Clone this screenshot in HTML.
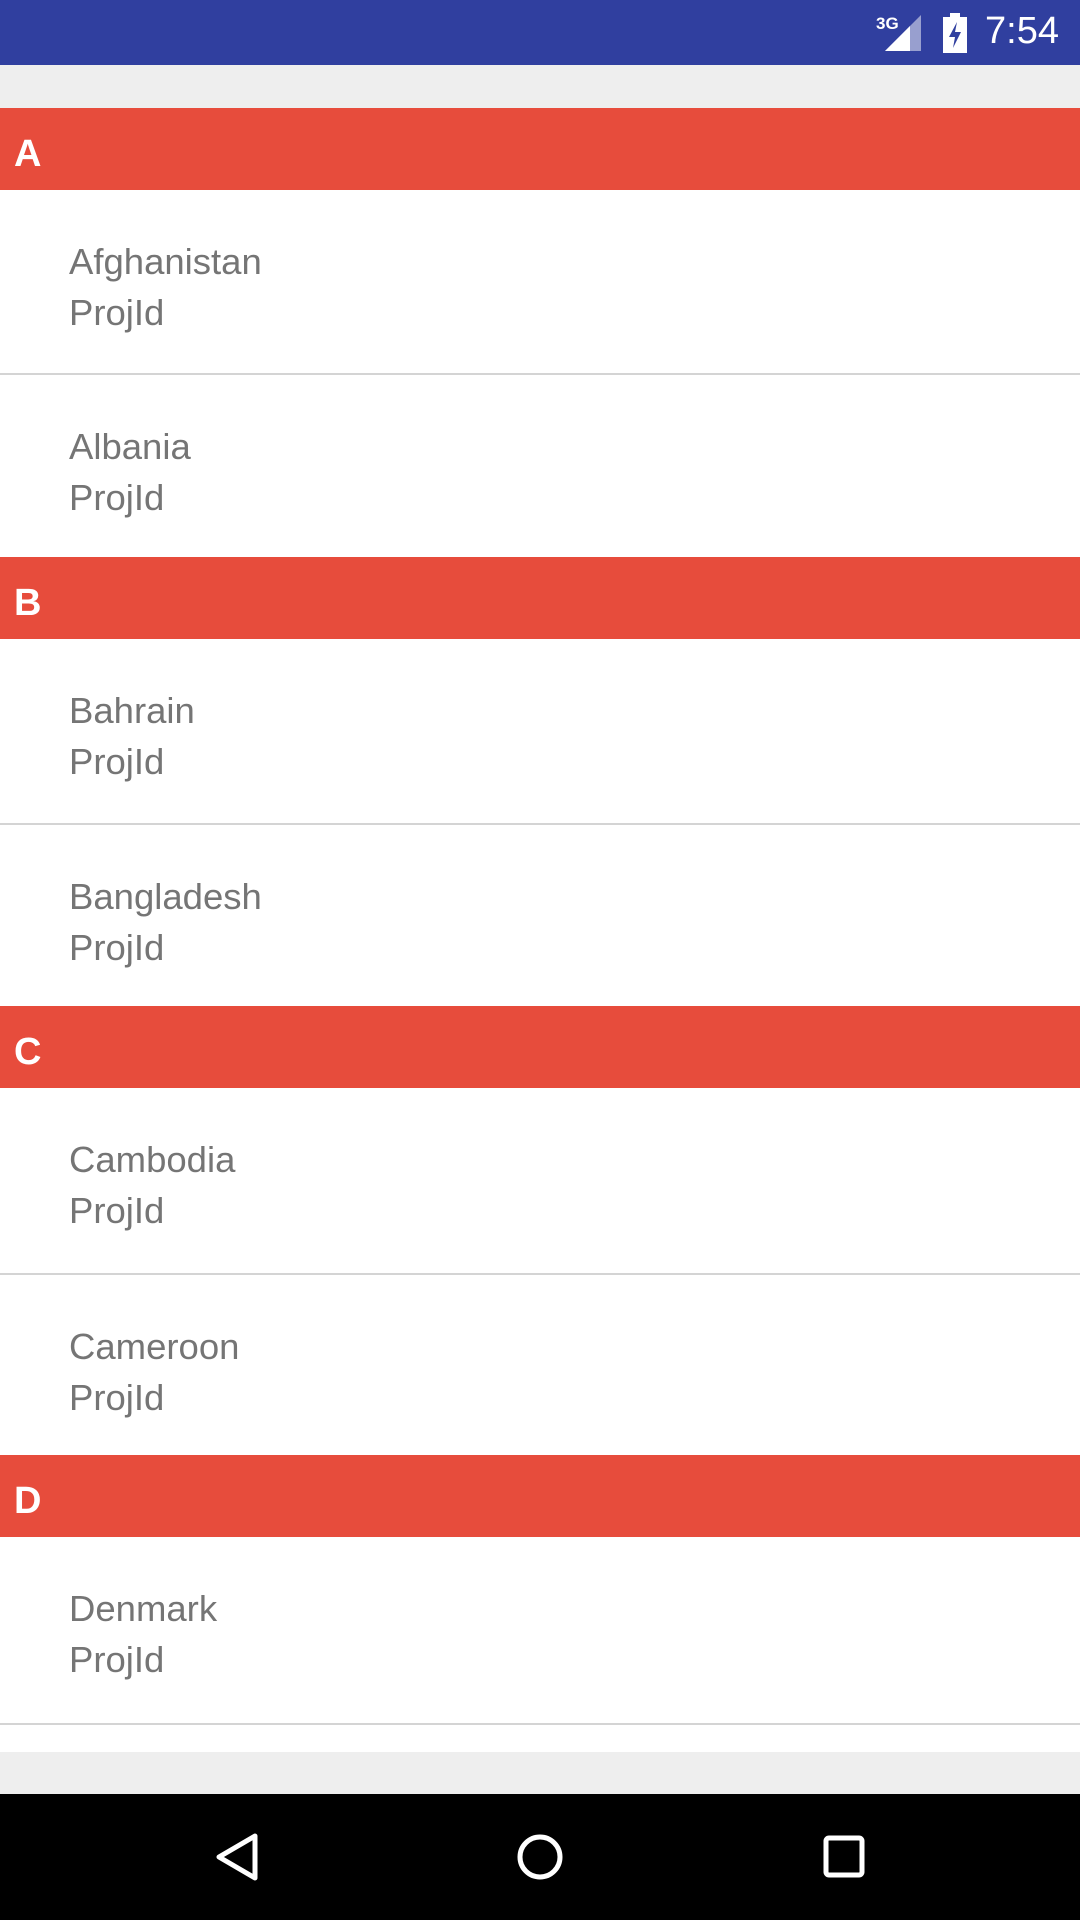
<!DOCTYPE html>
<html><head><meta charset="utf-8"><style>
*{margin:0;padding:0;box-sizing:border-box}
body{width:1080px;height:1920px;overflow:hidden;background:#eeeeee;font-family:"Liberation Sans",sans-serif;position:relative}
.sb{position:absolute;top:0;left:0;width:1080px;height:65px;background:#303f9f}
.hdr{position:absolute;left:0;width:1080px;height:82px;background:#e74c3c;color:#fff;font-weight:bold;font-size:38px;padding-left:14px;padding-top:5px;line-height:82px}
.it{position:absolute;left:0;width:1080px;background:#fff;border-bottom:2px solid #d4d4d4;color:#757575;font-size:36.5px}
.it span{position:absolute;left:69px}
.nav{position:absolute;left:0;top:1794px;width:1080px;height:126px;background:#000}
</style></head><body>
<div class="sb">
<span style="position:absolute;left:876px;top:14px;color:#fff;font-size:17px;font-weight:bold">3G</span>
<svg style="position:absolute;left:884px;top:14px" width="38" height="38"><polygon points="37,1 37,37 1,37" fill="#fff" opacity=".5"/><polygon points="26,12 26,37 1,37" fill="#fff"/></svg>
<svg style="position:absolute;left:942px;top:13px" width="26" height="40"><rect x="8" y="0" width="10" height="4" fill="#fff"/><rect x="1" y="4" width="24" height="36" fill="#fff"/><polygon points="15,9 7,24 13,24 11,35 19,19 13,19" fill="#303f9f"/></svg>
<span style="position:absolute;left:985px;top:10px;color:#fff;font-size:38px">7:54</span>
</div>

<div class="hdr" style="top:108px">A</div>
<div class="it" style="top:190px;height:185px"><span style="top:51px">Afghanistan</span><span style="top:102px">ProjId</span></div>
<div class="it" style="top:375px;height:182px;border:none"><span style="top:51px">Albania</span><span style="top:102px">ProjId</span></div>

<div class="hdr" style="top:557px">B</div>
<div class="it" style="top:639px;height:186px"><span style="top:51px">Bahrain</span><span style="top:102px">ProjId</span></div>
<div class="it" style="top:825px;height:181px;border:none"><span style="top:51px">Bangladesh</span><span style="top:102px">ProjId</span></div>

<div class="hdr" style="top:1006px">C</div>
<div class="it" style="top:1088px;height:187px"><span style="top:51px">Cambodia</span><span style="top:102px">ProjId</span></div>
<div class="it" style="top:1275px;height:180px;border:none"><span style="top:51px">Cameroon</span><span style="top:102px">ProjId</span></div>

<div class="hdr" style="top:1455px">D</div>
<div class="it" style="top:1537px;height:188px"><span style="top:51px">Denmark</span><span style="top:102px">ProjId</span></div>
<div class="it" style="top:1725px;height:27px;border:none"></div>

<div class="nav">
<svg style="position:absolute;left:214px;top:38px" width="46" height="50"><polygon points="41,4 41,46 5,25" fill="none" stroke="#fff" stroke-width="5" stroke-linejoin="round"/></svg>
<svg style="position:absolute;left:516px;top:38px" width="48" height="50"><circle cx="24" cy="25" r="20" fill="none" stroke="#fff" stroke-width="5"/></svg>
<svg style="position:absolute;left:822px;top:40px" width="44" height="46"><rect x="4" y="4" width="36" height="37" rx="3" fill="none" stroke="#fff" stroke-width="5"/></svg>
</div>
</body></html>
